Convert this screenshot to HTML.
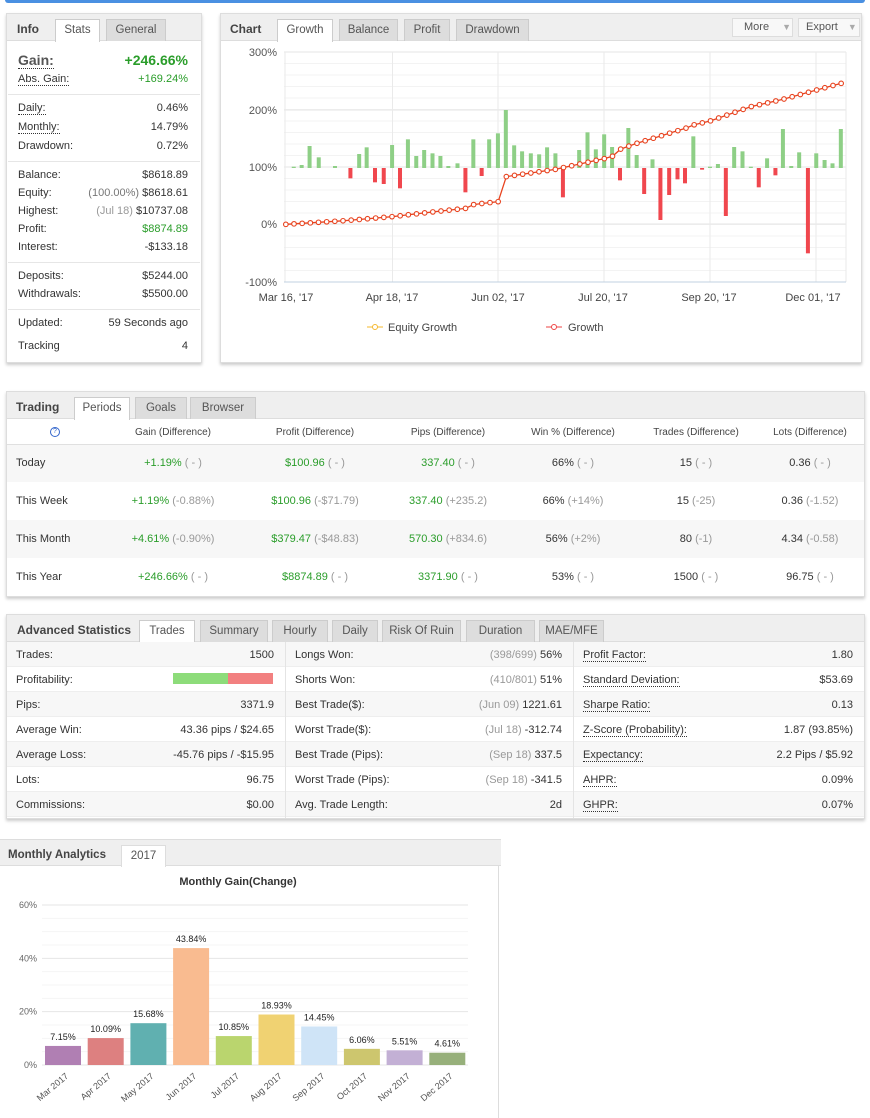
<!DOCTYPE html>
<html><head><meta charset="utf-8">
<style>
*{box-sizing:border-box;margin:0;padding:0}
body{width:870px;height:1118px;background:#fff;font-family:"Liberation Sans",Tahoma,sans-serif;font-size:11px;color:#333;position:relative;overflow:hidden}
.a{position:absolute;white-space:nowrap}
.panel{position:absolute;background:#fff;border:1px solid #ddd;box-shadow:0 2px 3px #ccc}
.hdr{position:absolute;left:0;right:0;top:0;height:27px;background:#efefef;border-bottom:1px solid #ddd}
.ttl{position:absolute;top:8px;font-weight:bold;font-size:12px;color:#444}
.tab{position:absolute;top:5px;height:22px;background:#ddd;border:1px solid #ccc;border-bottom:none;text-align:center;line-height:21px;font-size:11.5px;color:#555}
.tab.on{background:#fff;height:23px}
.g{color:#2a9d2a}
.m{color:#999}
.sep{position:absolute;left:1px;right:1px;height:1px;background:#e6e6e6}
.dot{border-bottom:1px dotted #333}
</style></head><body>
<div class="a" style="left:5px;top:0;width:860px;height:3px;background:#4a90e2;border-radius:0 0 3px 3px"></div>

<!-- INFO -->
<div class="panel" style="left:6px;top:13px;width:196px;height:350px">
 <div class="hdr"></div>
 <div class="ttl" style="left:10px">Info</div>
 <div class="tab on" style="left:48px;width:45px">Stats</div>
 <div class="tab" style="left:99px;width:60px">General</div>
 <div class="a" style="left:11px;top:38px;font-size:14px;font-weight:bold;color:#555"><span class="dot">Gain:</span></div>
 <div class="a g" style="right:13px;top:38px;font-size:14px;font-weight:bold">+246.66%</div>
 <div class="a" style="left:11px;top:59px"><span class="dot">Abs. Gain:</span></div><div class="a g" style="right:13px;top:59px">+169.24%</div>
 <div class="sep" style="top:80px"></div>
 <div class="a" style="left:11px;top:88px"><span class="dot">Daily:</span></div><div class="a" style="right:13px;top:88px">0.46%</div>
 <div class="a" style="left:11px;top:107px"><span class="dot">Monthly:</span></div><div class="a" style="right:13px;top:107px">14.79%</div>
 <div class="a" style="left:11px;top:126px">Drawdown:</div><div class="a" style="right:13px;top:126px">0.72%</div>
 <div class="sep" style="top:147px"></div>
 <div class="a" style="left:11px;top:155px">Balance:</div><div class="a" style="right:13px;top:155px">$8618.89</div>
 <div class="a" style="left:11px;top:173px">Equity:</div><div class="a" style="right:13px;top:173px"><span style="color:#777">(100.00%)</span> $8618.61</div>
 <div class="a" style="left:11px;top:191px">Highest:</div><div class="a" style="right:13px;top:191px"><span class="m">(Jul 18)</span> $10737.08</div>
 <div class="a" style="left:11px;top:209px">Profit:</div><div class="a g" style="right:13px;top:209px">$8874.89</div>
 <div class="a" style="left:11px;top:227px">Interest:</div><div class="a" style="right:13px;top:227px">-$133.18</div>
 <div class="sep" style="top:248px"></div>
 <div class="a" style="left:11px;top:256px">Deposits:</div><div class="a" style="right:13px;top:256px">$5244.00</div>
 <div class="a" style="left:11px;top:274px">Withdrawals:</div><div class="a" style="right:13px;top:274px">$5500.00</div>
 <div class="sep" style="top:295px"></div>
 <div class="a" style="left:11px;top:303px">Updated:</div><div class="a" style="right:13px;top:303px">59 Seconds ago</div>
 <div class="a" style="left:11px;top:326px">Tracking</div><div class="a" style="right:13px;top:326px">4</div>
</div>

<!-- CHART -->
<div class="panel" style="left:220px;top:13px;width:642px;height:350px">
 <div class="hdr"></div>
 <div class="ttl" style="left:9px">Chart</div>
 <div class="tab on" style="left:56px;width:56px">Growth</div>
 <div class="tab" style="left:118px;width:59px">Balance</div>
 <div class="tab" style="left:183px;width:46px">Profit</div>
 <div class="tab" style="left:235px;width:73px">Drawdown</div>
 <div class="a" style="left:511px;top:4px;width:61px;height:19px;border:1px solid #ddd;background:#f8f8f8;color:#555;line-height:17px;padding-left:11px">More <span style="color:#aaa;font-size:9px;margin-left:10px">▼</span></div>
 <div class="a" style="left:577px;top:4px;width:62px;height:19px;border:1px solid #ddd;background:#f8f8f8;color:#555;line-height:17px;padding-left:7px">Export <span style="color:#aaa;font-size:9px;margin-left:7px">▼</span></div>
</div>
<svg class="a" style="left:0;top:0" width="870" height="370" id="ch">
 <g font-family="Liberation Sans,sans-serif" font-size="11" fill="#555" text-anchor="end">
  <text x="277" y="56">300%</text><text x="277" y="114">200%</text><text x="277" y="171">100%</text><text x="277" y="228">0%</text><text x="277" y="286">-100%</text>
 </g>
 <g font-family="Liberation Sans,sans-serif" font-size="11" fill="#444" text-anchor="middle">
  <text x="286" y="301">Mar 16, '17</text><text x="392" y="301">Apr 18, '17</text><text x="498" y="301">Jun 02, '17</text><text x="603" y="301">Jul 20, '17</text><text x="709" y="301">Sep 20, '17</text><text x="813" y="301">Dec 01, '17</text>
 </g>
 <g font-family="Liberation Sans,sans-serif" font-size="11" fill="#444">
  <line x1="367" y1="327" x2="383" y2="327" stroke="#f5b82e"/><circle cx="375" cy="327" r="2.5" fill="#fff" stroke="#f5b82e"/>
  <text x="388" y="331">Equity Growth</text>
  <line x1="546" y1="327" x2="562" y2="327" stroke="#e44"/><circle cx="554" cy="327" r="2.5" fill="#fff" stroke="#e44"/>
  <text x="568" y="331">Growth</text>
 </g>
</svg>

<!-- TRADING -->
<div class="panel" style="left:6px;top:391px;width:859px;height:206px">
 <div class="hdr"></div>
 <div class="ttl" style="left:9px">Trading</div>
 <div class="tab on" style="left:67px;width:56px">Periods</div>
 <div class="tab" style="left:128px;width:52px">Goals</div>
 <div class="tab" style="left:183px;width:66px">Browser</div>
</div>
<div class="a" style="left:7px;top:444px;width:857px;height:1px;background:#e0e0e0"></div>
<div class="a" style="left:7px;top:445px;width:857px;height:37px;background:#f7f7f7"></div>
<div class="a" style="left:7px;top:520px;width:857px;height:38px;background:#f7f7f7"></div>
<div class="a" style="left:50px;top:427px;width:10px;height:10px;border:1px solid #36c;border-radius:50%;font-size:7px;color:#36c;text-align:center;line-height:8px">?</div>
<div id="tr"></div>

<!-- ADVANCED -->
<div class="panel" style="left:6px;top:614px;width:859px;height:205px">
 <div class="hdr"></div>
 <div class="ttl" style="left:10px">Advanced Statistics</div>
 <div class="tab on" style="left:132px;width:56px">Trades</div>
 <div class="tab" style="left:193px;width:68px">Summary</div>
 <div class="tab" style="left:265px;width:56px">Hourly</div>
 <div class="tab" style="left:325px;width:46px">Daily</div>
 <div class="tab" style="left:375px;width:79px">Risk Of Ruin</div>
 <div class="tab" style="left:459px;width:69px">Duration</div>
 <div class="tab" style="left:532px;width:65px">MAE/MFE</div>
</div>
<div id="adv"></div>

<!-- MONTHLY -->
<div class="a" style="left:0;top:839px;width:501px;height:1px;background:#ddd"></div>
<div class="a" style="left:0;top:840px;width:501px;height:26px;background:#efefef;border-bottom:1px solid #ddd"></div>
<div class="a" style="left:8px;top:849px;font-weight:bold;font-size:11.5px;color:#444">Monthly Analytics</div>
<div class="a" style="left:121px;top:845px;width:45px;height:22px;background:#fff;border:1px solid #ddd;border-bottom:none;text-align:center;line-height:20px;font-size:11.5px;color:#555">2017</div>
<div class="a" style="left:498px;top:866px;width:1px;height:252px;background:#ddd"></div>
<svg class="a" style="left:0;top:866px" width="500" height="252" id="mc">
 <text x="238" y="19" text-anchor="middle" font-family="Liberation Sans,sans-serif" font-size="11" font-weight="bold" fill="#333">Monthly Gain(Change)</text>
</svg>

<script>
var NS="http://www.w3.org/2000/svg";
function el(p,t,a,txt){var e=document.createElementNS(NS,t);for(var k in a)e.setAttribute(k,a[k]);if(txt!=null)e.textContent=txt;p.appendChild(e);return e;}
var ch=document.getElementById('ch');
var SX=2.4;function X(z){return 220+z/SX;}
for(var y=52;y<=282;y+=11.5)el(ch,'line',{x1:284,x2:846,y1:y,y2:y,stroke:'#f3f3f3'});
[52,110,167,224,282].forEach(function(y){el(ch,'line',{x1:284,x2:846,y1:y,y2:y,stroke:'#e4e4e4'})});
[285,392.5,498,604,710,816,846].forEach(function(x){el(ch,'line',{x1:x,x2:x,y1:52,y2:282,stroke:'#eaeaea'})});
el(ch,'line',{x1:284,x2:846,y1:282,y2:282,stroke:'#c0d0e0'});
var Z=168;
var gb=[[177,500],[196,495],[215,438],[237,472],[276,498],[334,462],[352,442],[413,435],[451,418],[471,468],[490,450],[510,460],[529,468],[548,498],[570,490],[608,418],[646,418],[667,400],[686,330],[706,436],[725,454],[746,460],[766,463],[785,442],[805,460],[862,450],[882,397],[902,448],[922,403],[941,441],[980,384],[1000,465],[1038,478],[1136,409],[1176,500],[1195,492],[1234,441],[1254,454],[1274,500],[1313,475],[1351,387],[1371,498],[1390,457],[1431,460],[1451,480],[1470,490],[1490,387]];
gb.forEach(function(b){var x=X(b[0]),y=b[1]/3;el(ch,'rect',{x:x-2,y:y,width:4,height:Z-y,fill:'#8ecf86'})});
var rb=[[313,535],[372,547],[393,552],[432,565],[589,577],[628,528],[823,592],[960,541],[1018,582],[1057,660],[1078,585],[1098,538],[1116,550],[1157,509],[1214,648],[1293,562],[1333,526],[1411,760]];
rb.forEach(function(b){var x=X(b[0]),y=b[1]/3;el(ch,'rect',{x:x-2,y:Z,width:4,height:y-Z,fill:'#f0474e'})});
var kp=[[158,673],[300,662],[413,650],[530,633],[590,625],[610,613],[668,605],[686,530],[805,508],[940,471],[960,448],[1000,430],[1117,385],[1136,375],[1176,363],[1274,320],[1351,298],[1490,250]];
function f(zx){for(var i=0;i<kp.length-1;i++){if(zx>=kp[i][0]&&zx<=kp[i+1][0]){var t=(zx-kp[i][0])/(kp[i+1][0]-kp[i][0]);return kp[i][1]+t*(kp[i+1][1]-kp[i][1]);}}return kp[kp.length-1][1];}
var pts=[];for(var zx=158;zx<=1491;zx+=19.6){pts.push([X(zx),f(zx)/3]);}
el(ch,'polyline',{points:pts.map(function(p){return p.join(',')}).join(' '),fill:'none',stroke:'#e8431f','stroke-width':1.3});
pts.forEach(function(p){el(ch,'circle',{cx:p[0],cy:p[1],r:2.3,fill:'#fff',stroke:'#e8431f','stroke-width':1.1})});

var tr=document.getElementById('tr'),h='';
var cx=[173,315,448,573,696,810];
var hd=['Gain (Difference)','Profit (Difference)','Pips (Difference)','Win % (Difference)','Trades (Difference)','Lots (Difference)'];
hd.forEach(function(t,i){h+='<div class="a" style="left:'+(cx[i]-60)+'px;width:120px;text-align:center;top:427px;font-size:10px;color:#444">'+t+'</div>'});
var rows=[['Today',463,[['+1.19%','( - )',1],['$100.96','( - )',1],['337.40','( - )',1],['66%','( - )'],['15','( - )'],['0.36','( - )']]],
['This Week',501,[['+1.19%','(-0.88%)',1],['$100.96','(-$71.79)',1],['337.40','(+235.2)',1],['66%','(+14%)'],['15','(-25)'],['0.36','(-1.52)']]],
['This Month',539,[['+4.61%','(-0.90%)',1],['$379.47','(-$48.83)',1],['570.30','(+834.6)',1],['56%','(+2%)'],['80','(-1)'],['4.34','(-0.58)']]],
['This Year',577,[['+246.66%','( - )',1],['$8874.89','( - )',1],['3371.90','( - )',1],['53%','( - )'],['1500','( - )'],['96.75','( - )']]]];
rows.forEach(function(r){h+='<div class="a" style="left:16px;top:'+(r[1]-6)+'px">'+r[0]+'</div>';
r[2].forEach(function(c,i){h+='<div class="a" style="left:'+(cx[i]-80)+'px;width:160px;text-align:center;top:'+(r[1]-6)+'px"><span'+(c[2]?' class="g"':'')+'>'+c[0]+'</span> <span class="m">'+c[1]+'</span></div>'})});
tr.innerHTML=h;

var adv=document.getElementById('adv');h='';
var cols=[[7,285],[286,573],[574,864]];
var data=[
[['Trades:','1500'],['Profitability:','BAR'],['Pips:','3371.9'],['Average Win:','43.36 pips / $24.65'],['Average Loss:','-45.76 pips / -$15.95'],['Lots:','96.75'],['Commissions:','$0.00']],
[['Longs Won:','<span class="m">(398/699)</span> 56%'],['Shorts Won:','<span class="m">(410/801)</span> 51%'],['Best Trade($):','<span class="m">(Jun 09)</span> 1221.61'],['Worst Trade($):','<span class="m">(Jul 18)</span> -312.74'],['Best Trade (Pips):','<span class="m">(Sep 18)</span> 337.5'],['Worst Trade (Pips):','<span class="m">(Sep 18)</span> -341.5'],['Avg. Trade Length:','2d']],
[['<span class="dot">Profit Factor:</span>','1.80'],['<span class="dot">Standard Deviation:</span>','$53.69'],['<span class="dot">Sharpe Ratio:</span>','0.13'],['<span class="dot">Z-Score (Probability):</span>','1.87 (93.85%)'],['<span class="dot">Expectancy:</span>','2.2 Pips / $5.92'],['<span class="dot">AHPR:</span>','0.09%'],['<span class="dot">GHPR:</span>','0.07%']]];
for(var i=0;i<7;i++){var y=642+i*25;h+='<div class="a" style="left:7px;top:'+y+'px;width:857px;height:25px;background:'+(i%2?'#fff':'#f7f7f7')+';border-bottom:1px solid #eee"></div>';}
h+='<div class="a" style="left:285px;top:642px;width:1px;height:176px;background:#e4e4e4"></div><div class="a" style="left:573px;top:642px;width:1px;height:176px;background:#e4e4e4"></div>';
data.forEach(function(col,c){col.forEach(function(d,i){var y=649+i*25;h+='<div class="a" style="left:'+(cols[c][0]+9)+'px;top:'+y+'px">'+d[0]+'</div>';
if(d[1]=='BAR')h+='<div class="a" style="left:173px;top:'+(y-1)+'px;width:55px;height:11px;background:#8ddc7a"></div><div class="a" style="left:228px;top:'+(y-1)+'px;width:45px;height:11px;background:#f28080"></div>';
else h+='<div class="a" style="right:'+(870-cols[c][1]+11)+'px;top:'+y+'px">'+d[1]+'</div>';})});
adv.innerHTML=h;

var mc=document.getElementById('mc');
var Y0=1065-866,pp=(1065-905)/60;
for(var v=0;v<=60;v+=5){var y=Y0-v*pp;el(mc,'line',{x1:42,x2:468,y1:y,y2:y,stroke:v%20==0?'#e6e6e6':'#f5f5f5'});}
[0,20,40,60].forEach(function(v){el(mc,'text',{x:37,y:Y0-v*pp+3,'text-anchor':'end','font-family':'Liberation Sans,sans-serif','font-size':9,fill:'#666'},v+'%')});
var mb=[['Mar 2017',7.15,'#b07fb3'],['Apr 2017',10.09,'#dd8080'],['May 2017',15.68,'#60b0b0'],['Jun 2017',43.84,'#f9bb90'],['Jul 2017',10.85,'#bad56e'],['Aug 2017',18.93,'#f0d272'],['Sep 2017',14.45,'#cfe4f7'],['Oct 2017',6.06,'#cdc66e'],['Nov 2017',5.51,'#c3b0d5'],['Dec 2017',4.61,'#97b07b']];
mb.forEach(function(b,i){var x=45+i*42.7,h2=b[1]*pp;
el(mc,'rect',{x:x,y:Y0-h2,width:36,height:h2,fill:b[2]});
el(mc,'text',{x:x+18,y:Y0-h2-6,'text-anchor':'middle','font-family':'Liberation Sans,sans-serif','font-size':9,fill:'#222'},b[1].toFixed(2)+'%');
el(mc,'text',{x:x+24,y:Y0+12,'text-anchor':'end','font-family':'Liberation Sans,sans-serif','font-size':9,fill:'#555',transform:'rotate(-40 '+(x+24)+' '+(Y0+12)+')'},b[0]);});
</script>
</body></html>
